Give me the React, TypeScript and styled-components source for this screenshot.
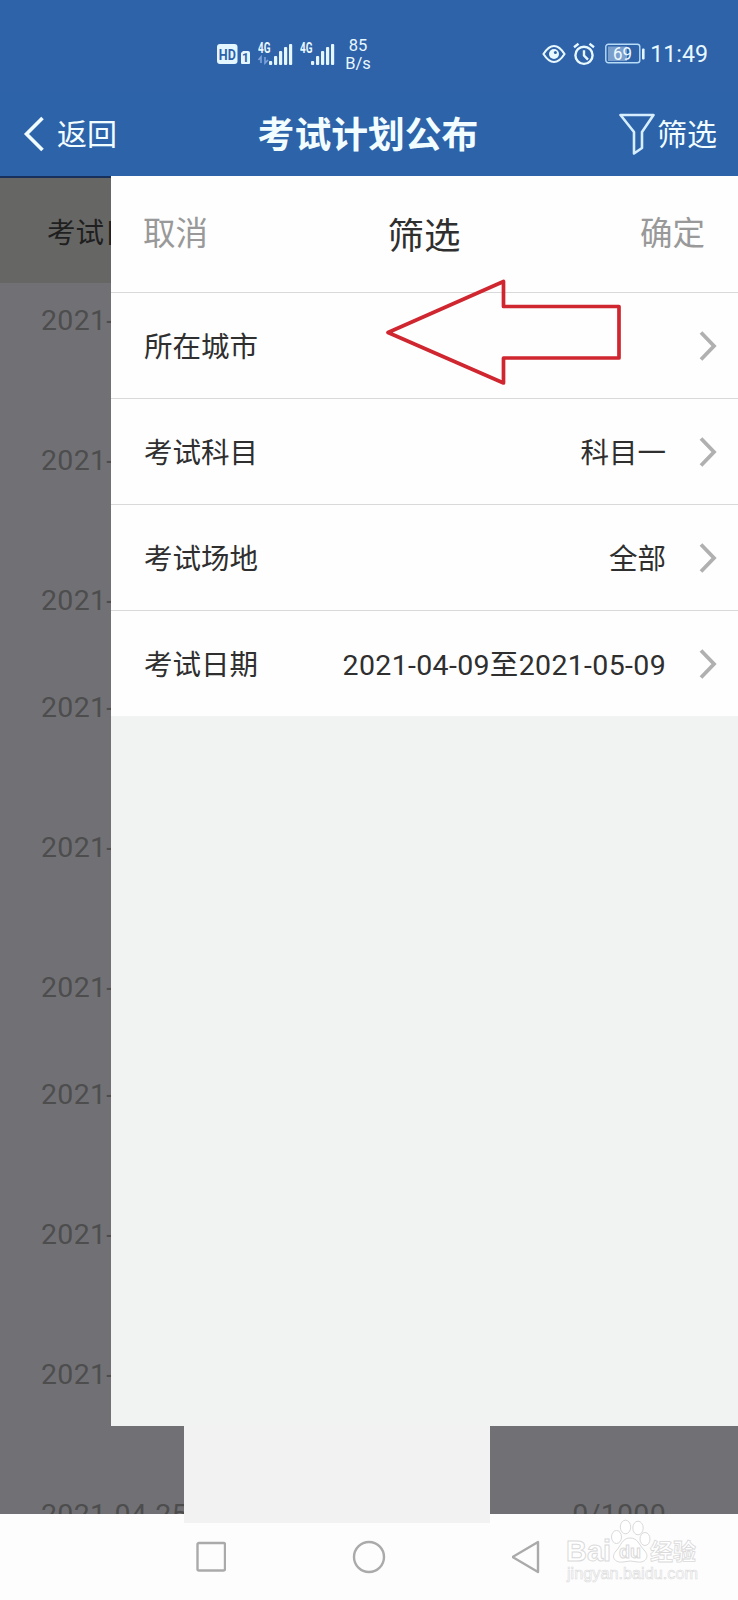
import React from "react";
import styled, { createGlobalStyle } from "styled-components";

const GlobalStyle = createGlobalStyle`
  * { box-sizing: border-box; }
  body { margin: 0; background: #fdfdfe; }
  svg { display: block; flex: none; }
`;

const Screen = styled.div`
  width: 738px;
  height: 1600px;
  display: flex;
  flex-direction: column;
  overflow: hidden;
  position: relative;
  font-family: Roboto, "Noto Sans CJK SC", sans-serif;
  color: #2f2f2f;
`;

const StatusBar = styled.header`
  height: 92px;
  flex: none;
  display: flex;
  align-items: flex-start;
  justify-content: space-between;
  padding: 34px 30px 0 216px;
  background: #2e62a9;
  color: #e8f8ff;
`;

const StatusGroup = styled.div`
  display: flex;
  align-items: center;
  height: 40px;
`;

const Speed = styled.div`
  width: 26px;
  margin-left: 9px;
  padding-top: 1px;
  font-size: 16.5px;
  line-height: 18px;
  text-align: center;
`;

const Clock = styled.span`
  margin-left: 5px;
  font-size: 23.2px;
  line-height: 40px;
`;

const TitleBar = styled.nav`
  height: 84px;
  flex: none;
  display: grid;
  grid-template-columns: 1fr auto 1fr;
  align-items: center;
  padding: 0 21px 0 23px;
  background: #2c63a9;
  color: #f2fdff;
`;

const BarAction = styled.button<{ $end?: boolean }>`
  display: flex;
  align-items: center;
  justify-content: ${(p) => (p.$end ? "flex-end" : "flex-start")};
  gap: ${(p) => (p.$end ? "2px" : "13px")};
  padding: 0;
  border: 0;
  background: none;
  color: inherit;
  font: 400 30px/40px Roboto, "Noto Sans CJK SC", sans-serif;
`;

const ActionLabel = styled.span`
  padding-top: 2px;
`;

const PageTitle = styled.h1`
  margin: 0;
  padding: 4px 4px 0 0;
  font-size: 36.8px;
  line-height: 50px;
  font-weight: 700;
`;

const Main = styled.main`
  height: 1338px;
  flex: none;
  position: relative;
  background: #717175;
`;

const PlanList = styled.div`
  height: 100%;
  overflow: hidden;
`;

const PlanHead = styled.div`
  height: 107px;
  border-top: 2px solid #17305c;
  background: #666665;
  padding: 36px 0 0 47px;
  font-size: 28.5px;
  line-height: 40px;
  color: #1f1f1f;
`;

const PlanRow = styled.div<{ $h: number }>`
  height: ${(p) => p.$h}px;
  display: flex;
  justify-content: space-between;
  padding: 18px 72px 0 41px;
  font-size: 28.5px;
  line-height: 40px;
  letter-spacing: 0.3px;
  color: #4d4d4e;
`;

const Drawer = styled.section`
  position: absolute;
  top: 0;
  right: 0;
  width: 627px;
  height: 1250px;
  background: #f1f2f2;
`;

const DrawerHead = styled.div`
  height: 116px;
  display: flex;
  justify-content: space-between;
  align-items: center;
  padding: 0 33px 0 32px;
  background: #fefefe;
`;

const DrawerTitle = styled.h2`
  margin: 6px 0 0;
  font-size: 36.5px;
  line-height: 50px;
  font-weight: 400;
`;

const TextButton = styled.button`
  padding: 0;
  border: 0;
  margin-bottom: 6px;
  background: none;
  color: #999;
  font: 400 32.5px/44px "Noto Sans CJK SC", sans-serif;
`;

const FilterRow = styled.div`
  height: 106px;
  display: flex;
  align-items: center;
  padding: 0 21px 0 33px;
  border-top: 1px solid #d9d9d9;
  background: #fefefe;
  font-size: 28.5px;
  line-height: 40px;
`;

const FilterLabel = styled.span`
  padding-top: 5px;
`;

const FilterValue = styled.span<{ $numeric: boolean }>`
  margin-left: auto;
  margin-right: 33px;
  padding-top: ${(p) => (p.$numeric ? "4px" : "5px")};
  letter-spacing: ${(p) => (p.$numeric ? "0.34px" : "0")};
`;

const MaskBlock = styled.div`
  position: absolute;
  left: 184px;
  top: 1249px;
  width: 306px;
  height: 98px;
  background: #f1f2f1;
`;

const Pointer = styled.svg`
  position: absolute;
  left: 384px;
  top: 276px;
`;

const SystemNav = styled.footer`
  flex: 1;
  display: flex;
  align-items: center;
  background: #fdfdfe;
  padding-left: 196px;
  gap: 126px;
`;

const Watermark = styled.svg`
  position: absolute;
  left: 560px;
  top: 1515px;
`;

const Signal = ({ data }: { data?: boolean }) => (
  <svg width="36" height="24" viewBox="0 0 36 24">
    <text x="0" y="11" fontSize="14" fontWeight="700" textLength="12.5" lengthAdjust="spacingAndGlyphs" fill="#e8f8ff">4G</text>
    {data && (
      <path d="M3 21v-6l-2.500 3M7 15v6l3-3" fill="none" stroke="#7da3dc" strokeWidth="1.6" />
    )}
    <g fill="#e4f6ff">
      <rect x="11" y="19" width="3.200" height="4" rx="1" />
      <rect x="16" y="14" width="3.200" height="9" rx="1" />
      <rect x="21" y="9" width="3.200" height="14" rx="1" />
      <rect x="26" y="5" width="3.200" height="18" rx="1" />
      <rect x="31" y="2" width="3.200" height="21" rx="1" />
    </g>
  </svg>
);

const HdBadge = () => (
  <svg width="36" height="24" viewBox="0 0 36 24">
    <rect x="1" y="2" width="20.5" height="20" rx="3" fill="#e4f6ff" />
    <text x="2.8" y="17.5" fontSize="15" fontWeight="700" textLength="17" lengthAdjust="spacingAndGlyphs" fill="#2e62a9">HD</text>
    <path d="M27 9h5q2 0 2 2v10q0 1-1 1h-7q-1 0-1-1V11z" fill="#e4f6ff" />
    <text x="26" y="20" fontSize="12" fontWeight="700" fill="#2e62a9">1</text>
  </svg>
);

const Eye = () => (
  <svg width="24" height="20" viewBox="0 0 24 20" fill="none" stroke="#e8f8ff" strokeWidth="2.1">
    <path d="M1.5 10Q6.5 2 12 2T22.5 10Q17.5 18 12 18T1.5 10Z" />
    <circle cx="12" cy="10" r="5" fill="#e8f8ff" stroke="none" />
    <circle cx="13.400" cy="8.6" r="1.500" fill="#2e62a9" stroke="none" />
  </svg>
);

const AlarmIcon = styled.svg`
  margin-left: 7px;
`;

const BatteryIcon = styled.svg`
  margin-left: 10px;
`;

const Alarm = () => (
  <AlarmIcon width="22" height="24" viewBox="0 0 22 24" fill="none" stroke="#e8f8ff" strokeWidth="2.400">
    <circle cx="11" cy="13.3" r="8.6" />
    <path d="M11 8.2v5.4l4 4M1 5.2L5.5 1.8M21 5.2L16.5 1.8" />
  </AlarmIcon>
);

const Battery = () => (
  <BatteryIcon width="40" height="22" viewBox="0 0 40 22">
    <rect x="3" y="3.500" width="19" height="14.500" fill="#7b9fcd" />
    <rect x="0.8" y="1.3" width="34" height="18.5" rx="2.5" fill="none" stroke="#b7dcf8" strokeWidth="1.4" />
    <rect x="37" y="5.5" width="2.6" height="11" rx="1" fill="#e4f6ff" />
    <text x="8" y="17" fontSize="18" fill="#eefaff" textLength="19" lengthAdjust="spacingAndGlyphs">69</text>
  </BatteryIcon>
);

const Chevron = () => (
  <svg width="18" height="30" viewBox="0 0 18 30" fill="none" stroke="#b0b0b0" strokeWidth="3.8">
    <path d="M2 1.5L15 15L2 28.5" />
  </svg>
);

const plans = [
  { date: "2021-", h: 140 },
  { date: "2021-", h: 140 },
  { date: "2021-", h: 107 },
  { date: "2021-", h: 140 },
  { date: "2021-", h: 140 },
  { date: "2021-", h: 107 },
  { date: "2021-", h: 140 },
  { date: "2021-", h: 140 },
  { date: "2021-", h: 140 },
  { date: "2021-04-25", count: "0/1000", h: 107 },
];

const filters = [
  { label: "所在城市", value: "" },
  { label: "考试科目", value: "科目一" },
  { label: "考试场地", value: "全部" },
  { label: "考试日期", value: "2021-04-09至2021-05-09", numeric: true },
];

export default function App() {
  return (
    <Screen>
      <GlobalStyle />
      <StatusBar>
        <StatusGroup>
          <HdBadge />
          <svg width="6" height="1" />
          <Signal data />
          <svg width="6" height="1" />
          <Signal />
          <Speed>
            85
            <br />
            B/s
          </Speed>
        </StatusGroup>
        <StatusGroup>
          <Eye />
          <Alarm />
          <Battery />
          <Clock>11:49</Clock>
        </StatusGroup>
      </StatusBar>

      <TitleBar>
        <BarAction>
          <svg width="21" height="36" viewBox="0 0 21 36" fill="none" stroke="#f0fcff" strokeWidth="3.6">
            <path d="M19.500 2L3.500 18L19.500 34" />
          </svg>
          <ActionLabel>返回</ActionLabel>
        </BarAction>
        <PageTitle>考试计划公布</PageTitle>
        <BarAction $end>
          <svg width="36" height="42" viewBox="0 0 36 42" fill="none" stroke="#d6eeff" strokeWidth="2.6" strokeLinejoin="round">
            <path d="M1.5 2H34.5L23 19V35L15 40.5V19Z" />
          </svg>
          <ActionLabel>筛选</ActionLabel>
        </BarAction>
      </TitleBar>

      <Main>
        <PlanList>
          <PlanHead>考试日</PlanHead>
          {plans.map((p, i) => (
            <PlanRow key={i} $h={p.h}>
              <span>{p.date}</span>
              {p.count && <span>{p.count}</span>}
            </PlanRow>
          ))}
        </PlanList>
        <Drawer>
          <DrawerHead>
            <TextButton>取消</TextButton>
            <DrawerTitle>筛选</DrawerTitle>
            <TextButton>确定</TextButton>
          </DrawerHead>
          {filters.map((f) => (
            <FilterRow key={f.label}>
              <FilterLabel>{f.label}</FilterLabel>
              <FilterValue $numeric={!!f.numeric}>{f.value}</FilterValue>
              <Chevron />
            </FilterRow>
          ))}
        </Drawer>
        <MaskBlock />
      </Main>

      <SystemNav>
        <svg width="30" height="32" viewBox="0 0 30 32" fill="none" stroke="#aaa" strokeWidth="2.4">
          <rect x="1.5" y="2" width="27.5" height="27.5" rx="1.5" />
        </svg>
        <svg width="34" height="34" viewBox="0 0 34 34" fill="none" stroke="#aaa" strokeWidth="2.4">
          <circle cx="17" cy="17" r="15" />
        </svg>
        <svg width="30" height="34" viewBox="0 0 30 34" fill="none" stroke="#aaa" strokeWidth="2.4" strokeLinejoin="round">
          <path d="M0.500 17L26 2V32Z" />
        </svg>
      </SystemNav>

      <Pointer width="240" height="114" viewBox="384 276 240 114" fill="none" stroke="#cf2630" strokeWidth="3.7" strokeLinejoin="round">
        <path d="M388 332.5L503.5 281.5V306.5H619V358H503.5V383Z" />
      </Pointer>

      <Watermark width="150" height="72" viewBox="560 1515 150 72" fill="#fff" stroke="#dadada" strokeWidth="1">
        <text x="566" y="1561" fontFamily="Liberation Sans, sans-serif" fontWeight="700" fontSize="30" textLength="45" lengthAdjust="spacingAndGlyphs">Bai</text>
        <ellipse cx="616.5" cy="1537" rx="5" ry="6.5" />
        <ellipse cx="625.5" cy="1527" rx="5.2" ry="6.8" />
        <ellipse cx="638" cy="1528" rx="5.2" ry="6.8" />
        <ellipse cx="645" cy="1539" rx="5" ry="6.5" />
        <path d="M630 1538C622 1538 621 1546 616 1551C610 1558 616 1563 623 1562Q630 1560 638 1562C646 1563 650 1556 644 1550C639 1545 638 1538 630 1538Z" />
        <text x="619" y="1558" fontFamily="Liberation Sans, sans-serif" fontWeight="700" fontSize="18" textLength="22" lengthAdjust="spacingAndGlyphs">du</text>
        <text x="650" y="1560" fontFamily="Noto Sans CJK SC, sans-serif" fontWeight="700" fontSize="23" textLength="46" lengthAdjust="spacingAndGlyphs" strokeWidth="0.8">经验</text>
        <text x="567" y="1579" fontFamily="Liberation Sans, sans-serif" fontSize="17" textLength="131" lengthAdjust="spacingAndGlyphs" strokeWidth="0.6">jingyan.baidu.com</text>
      </Watermark>
    </Screen>
  );
}
